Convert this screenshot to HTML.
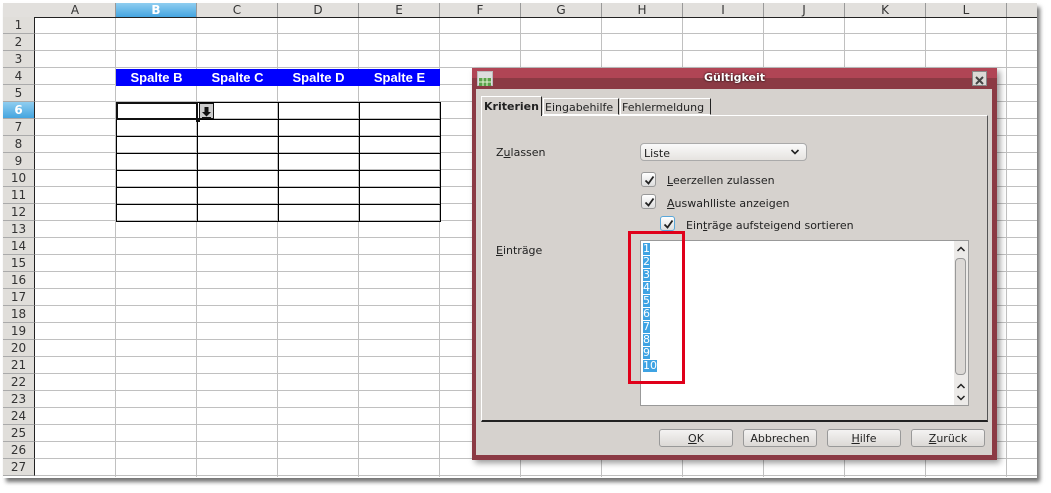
<!DOCTYPE html>
<html><head><meta charset="utf-8"><style>
*{margin:0;padding:0;box-sizing:border-box}
body{width:1051px;height:493px;background:#fff;position:relative;overflow:hidden;font-family:"DejaVu Sans","Liberation Sans",sans-serif;}
.a{position:absolute}
.sheet{left:3px;top:3px;width:1034px;height:475px;background:#fff;box-shadow:3px 4px 4px rgba(0,0,0,.55);}
.grid{left:35px;top:17px;width:1002px;height:460px;
background-image:repeating-linear-gradient(90deg,transparent 0 80px,#c0c0c0 80px 81px),repeating-linear-gradient(180deg,transparent 0 16px,#c0c0c0 16px 17px);}
.colh{top:3px;height:15px;background:#e2e0dd;border-bottom:1px solid #222;}
.ch{position:absolute;top:3px;height:14px;font:12px "DejaVu Sans",sans-serif;color:#333;text-align:center;border-right:1px solid #999;line-height:15px}
.rh{position:absolute;left:3px;width:32px;height:17px;background:#e0deda;border-bottom:1px solid #aaa;border-right:1px solid #222;font:12px "DejaVu Sans",sans-serif;color:#333;text-align:center;line-height:17px}
.hd{position:absolute;top:69px;height:17px;background:#0000ff;color:#fff;font:bold 13px "Liberation Sans",sans-serif;text-align:center;line-height:17px;width:81px}
.dlg{left:472px;top:68px;width:525px;height:392px;background:#8b3a44;box-shadow:3px 3px 6px rgba(0,0,0,.4)}
.t{font-size:11px;color:#222;position:absolute;white-space:nowrap}
.cb{position:absolute;width:15px;height:15px;border:1px solid #999;border-radius:3px;background:linear-gradient(#fff,#ddd)}
.cb svg{position:absolute;left:1px;top:1px}
.btn{position:absolute;top:429px;height:18px;width:74px;border:1px solid #999;border-radius:3px;background:linear-gradient(#f4f3f2,#dcd9d6);font-size:11px;text-align:center;line-height:17px;color:#222}
.n{position:absolute;left:643px;font-size:11px;color:#fff;background:#3fa3e3;line-height:12px;height:12px}
</style></head><body>
<div class="a sheet"></div>
<div class="a grid"></div>
<div class="a colh" style="left:3px;width:1034px"></div>
<div class="ch" style="left:35px;width:81px">A</div>
<div class="ch" style="left:116px;width:81px;background:linear-gradient(#8fcdf0,#45a5e0);color:#fff;font-weight:bold">B</div>
<div class="ch" style="left:197px;width:81px">C</div>
<div class="ch" style="left:278px;width:81px">D</div>
<div class="ch" style="left:359px;width:81px">E</div>
<div class="ch" style="left:440px;width:81px">F</div>
<div class="ch" style="left:521px;width:81px">G</div>
<div class="ch" style="left:602px;width:81px">H</div>
<div class="ch" style="left:683px;width:81px">I</div>
<div class="ch" style="left:764px;width:81px">J</div>
<div class="ch" style="left:845px;width:81px">K</div>
<div class="ch" style="left:926px;width:81px">L</div>
<div class="rh" style="top:17px">1</div><div class="rh" style="top:34px">2</div><div class="rh" style="top:51px">3</div><div class="rh" style="top:68px">4</div><div class="rh" style="top:85px">5</div><div class="rh" style="top:102px;background:linear-gradient(#8fcdf0,#45a5e0);color:#fff;font-weight:bold">6</div><div class="rh" style="top:119px">7</div><div class="rh" style="top:136px">8</div><div class="rh" style="top:153px">9</div><div class="rh" style="top:170px">10</div><div class="rh" style="top:187px">11</div><div class="rh" style="top:204px">12</div><div class="rh" style="top:221px">13</div><div class="rh" style="top:238px">14</div><div class="rh" style="top:255px">15</div><div class="rh" style="top:272px">16</div><div class="rh" style="top:289px">17</div><div class="rh" style="top:306px">18</div><div class="rh" style="top:323px">19</div><div class="rh" style="top:340px">20</div><div class="rh" style="top:357px">21</div><div class="rh" style="top:374px">22</div><div class="rh" style="top:391px">23</div><div class="rh" style="top:408px">24</div><div class="rh" style="top:425px">25</div><div class="rh" style="top:442px">26</div><div class="rh" style="top:459px">27</div>
<div class="hd" style="left:116px">Spalte B</div><div class="hd" style="left:197px">Spalte C</div><div class="hd" style="left:278px">Spalte D</div><div class="hd" style="left:359px">Spalte E</div>
<div class="a" style="left:116px;top:102px;width:325px;height:120px;background-image:repeating-linear-gradient(90deg,transparent 0 80px,#000 80px 81px),repeating-linear-gradient(180deg,transparent 0 16px,#000 16px 17px);border-left:1px solid #000;border-top:1px solid #000"></div>
<div class="a" style="left:116px;top:102px;width:82px;height:18px;border:2px solid #111"></div>
<div class="a" style="left:196px;top:118px;width:4px;height:4px;background:#111"></div>
<div class="a" style="left:199px;top:103px;width:15px;height:16px;border:1px solid #111;background:#ccc"><svg width="13" height="14"><path d="M4.5 2h4v5h2.5l-4.5 4.5L2 7h2.5z" fill="#111"/><rect x="2" y="12" width="9" height="1" fill="#111"/></svg></div>

<div class="a dlg"></div>
<div class="a" style="left:472px;top:68px;width:525px;height:10px;background:#b04555"></div>
<div class="a" style="left:477px;top:71px;width:16px;height:15px;background:#ddd;border:1px solid #bbb"><svg width="14" height="13"><rect x="1" y="4" width="12" height="8" fill="#5aa24a"/><path d="M1 8h12M5 4v8M9 4v8" stroke="#e8f5d8" stroke-width="1"/></svg></div>
<div class="a" style="left:472px;top:71px;width:525px;text-align:center;color:#fff;font-weight:bold;font-size:11px;text-shadow:0 0 2px #000">Gültigkeit</div>
<div class="a" style="left:972px;top:71px;width:15px;height:15px;background:#dcd9d6;border:1px solid #888"><svg width="13" height="13"><path d="M3 3l7 7M10 3l-7 7" stroke="#444" stroke-width="2"/></svg></div>
<div class="a" style="left:476px;top:89px;width:516px;height:366px;background:#d6d2ce"></div>
<div class="a" style="left:481px;top:115px;width:507px;height:307px;border:1px solid #fff;border-right-color:#555;border-bottom:2px solid #222"></div>
<div class="a" style="left:481px;top:96px;width:61px;height:20px;background:#d6d2ce;border:1px solid #fff;border-right:1px solid #222;border-bottom:none"></div>
<div class="t" style="left:484px;top:100px;font-weight:bold">Kriterien</div>
<div class="a" style="left:543px;top:98px;width:76px;height:17px;border:1px solid #fff;border-right:1px solid #222"></div>
<div class="t" style="left:545px;top:101px">Eingabehilfe</div>
<div class="a" style="left:620px;top:98px;width:91px;height:17px;border:1px solid #fff;border-right:1px solid #222"></div>
<div class="t" style="left:622px;top:101px">Fehlermeldung</div>
<div class="t" style="left:496px;top:146px">Z<u>u</u>lassen</div>
<div class="a" style="left:640px;top:143px;width:167px;height:18px;border:1px solid #aaa;border-radius:4px;background:linear-gradient(#fafafa,#e6e3e0)"></div>
<div class="t" style="left:644px;top:147px">Liste</div>
<svg class="a" style="left:790px;top:148px" width="10" height="8"><path d="M1.5 2l3.5 3.5L8.5 2" stroke="#222" stroke-width="1.6" fill="none"/></svg>
<div class="cb" style="left:641px;top:172px"><svg width="13" height="13"><path d="M2.5 6.5l3 3 5-7" stroke="#222" stroke-width="1.8" fill="none"/></svg></div>
<div class="t" style="left:667px;top:174px"><u>L</u>eerzellen zulassen</div>
<div class="cb" style="left:641px;top:194px"><svg width="13" height="13"><path d="M2.5 6.5l3 3 5-7" stroke="#222" stroke-width="1.8" fill="none"/></svg></div>
<div class="t" style="left:667px;top:197px"><u>A</u>uswahlliste anzeigen</div>
<div class="cb" style="left:660px;top:216px;border-color:#5aa7d9"><svg width="13" height="13"><path d="M2.5 6.5l3 3 5-7" stroke="#222" stroke-width="1.8" fill="none"/></svg></div>
<div class="t" style="left:686px;top:219px">Ein<u>t</u>räge aufsteigend sortieren</div>
<div class="t" style="left:496px;top:244px"><u>E</u>inträge</div>
<div class="a" style="left:640px;top:240px;width:329px;height:166px;background:#fff;border:1px solid #999"></div>
<div class="a" style="left:954px;top:241px;width:14px;height:164px;background:#eceae8"></div>
<div class="a" style="left:955px;top:258px;width:11px;height:117px;border:1px solid #999;border-radius:4px;background:#dcd9d6"></div>
<svg class="a" style="left:956px;top:245px" width="10" height="8"><path d="M1.5 6L5 2.5 8.5 6" stroke="#222" stroke-width="1.5" fill="none"/></svg>
<svg class="a" style="left:956px;top:382px" width="10" height="8"><path d="M1.5 6L5 2.5 8.5 6" stroke="#222" stroke-width="1.5" fill="none"/></svg>
<svg class="a" style="left:956px;top:394px" width="10" height="8"><path d="M1.5 2L5 5.5 8.5 2" stroke="#222" stroke-width="1.5" fill="none"/></svg>
<div class="n" style="top:243px">1</div><div class="n" style="top:256px">2</div><div class="n" style="top:269px">3</div><div class="n" style="top:282px">4</div><div class="n" style="top:295px">5</div><div class="n" style="top:308px">6</div><div class="n" style="top:321px">7</div><div class="n" style="top:334px">8</div><div class="n" style="top:347px">9</div><div class="n" style="top:360px">10</div>
<div class="a" style="left:628px;top:231px;width:57px;height:153px;border:3px solid #e0001a"></div>
<div class="btn" style="left:659px"><u>O</u>K</div>
<div class="btn" style="left:743px">Abbrechen</div>
<div class="btn" style="left:827px"><u>H</u>ilfe</div>
<div class="btn" style="left:911px"><u>Z</u>urück</div>
</body></html>
